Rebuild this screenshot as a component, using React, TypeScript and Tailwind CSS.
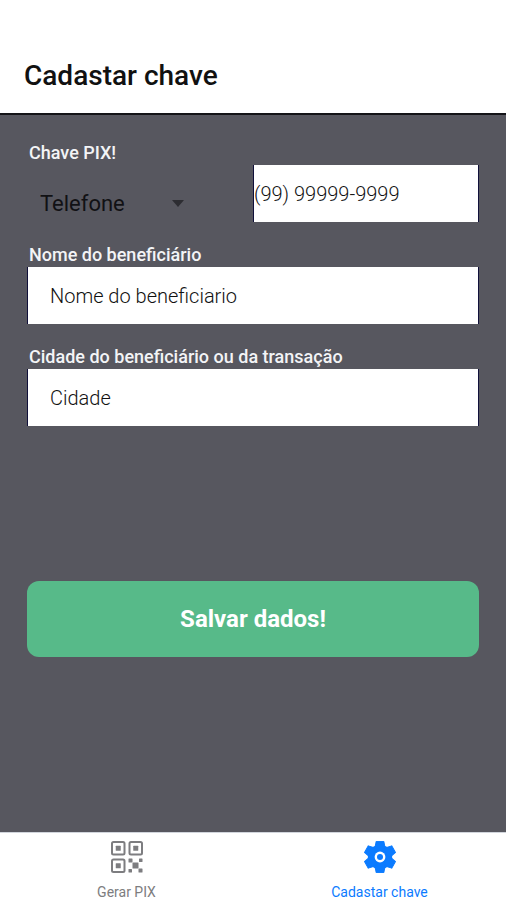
import { useState } from "react";

const labelClass =
  "block h-6 pl-0.5 text-lg leading-6 font-medium text-gray-100";
const inputClass =
  "h-[57px] w-full border-x border-[#10103a] bg-white text-xl font-light text-black placeholder:text-[#111111] outline-none";

function QrIcon() {
  return (
    <svg viewBox="0 0 32 32" className="size-8" aria-hidden="true">
      <g fill="none" stroke="currentColor" strokeWidth="2">
        <rect x="1" y="1" width="12.5" height="12.5" rx="1.5" />
        <rect x="18.5" y="1" width="12.5" height="12.5" rx="1.5" />
        <rect x="1" y="18.5" width="12.5" height="12.5" rx="1.5" />
      </g>
      <g fill="currentColor">
        <rect x="4.75" y="4.75" width="5" height="5" rx="0.5" />
        <rect x="22.25" y="4.75" width="5" height="5" rx="0.5" />
        <rect x="4.75" y="22.25" width="5" height="5" rx="0.5" />
        <rect x="21.5" y="21.5" width="6" height="6" rx="0.5" />
        <rect x="17.5" y="17.5" width="4" height="4" rx="0.5" />
        <rect x="28" y="17.5" width="3.5" height="3.5" rx="0.5" />
        <rect x="17.5" y="28" width="3.5" height="3.5" rx="0.5" />
        <rect x="27.5" y="27.5" width="4" height="4" rx="0.5" />
      </g>
    </svg>
  );
}

function GearIcon() {
  return (
    <svg viewBox="0 0 32 32" className="size-8" aria-hidden="true">
      <circle cx="16" cy="16" r="12.2" fill="currentColor" />
      <g
        fill="currentColor"
        stroke="currentColor"
        strokeWidth="1"
        strokeLinejoin="round"
      >
        {[0, 60, 120, 180, 240, 300].map((angle) => (
          <path
            key={angle}
            d="M12.2 0.3h7.6l1 5.2v4h-9.6v-4z"
            transform={`rotate(${angle} 16 16)`}
          />
        ))}
      </g>
      <circle cx="16" cy="16" r="5.4" fill="white" />
      <circle cx="16" cy="16" r="3" fill="currentColor" />
    </svg>
  );
}

export default function App() {
  const [keyType, setKeyType] = useState("Telefone");

  return (
    <div className="flex min-h-screen flex-col bg-[#57575f] font-['Roboto',sans-serif]">
      <header className="border-b-2 border-[#141418] bg-white px-6 pt-14 pb-[17px]">
        <h1 className="text-[28px] leading-10 font-medium text-[#111111]">
          Cadastar chave
        </h1>
      </header>

      <main className="flex-1 px-[27px] pt-[26px]">
        <form onSubmit={(e) => e.preventDefault()}>
          <div className="flex flex-col gap-[21px]">
            <div>
              <label htmlFor="key-type" className={labelClass}>
                Chave PIX!
              </label>
              <div className="grid grid-cols-2">
                <div className="relative">
                  <select
                    id="key-type"
                    value={keyType}
                    onChange={(e) => setKeyType(e.target.value)}
                    className="h-[57px] w-44 appearance-none bg-transparent pt-5 pl-[13px] text-[22px] text-[#111114] outline-none"
                  >
                    <option>Telefone</option>
                    <option>CPF</option>
                    <option>E-mail</option>
                  </select>
                  <svg
                    viewBox="0 0 12 7"
                    className="pointer-events-none absolute top-[35px] left-[145px] h-[7px] w-3 fill-[#2d2d32]"
                  >
                    <path d="M0 0h12L6 7z" />
                  </svg>
                </div>
                <input
                  type="tel"
                  aria-label="Telefone"
                  placeholder="(99) 99999-9999"
                  className={inputClass}
                />
              </div>
            </div>

            <div>
              <label htmlFor="name" className={labelClass}>
                Nome do beneficiário
              </label>
              <input
                id="name"
                type="text"
                placeholder="Nome do beneficiario"
                className={`${inputClass} px-[22px]`}
              />
            </div>

            <div>
              <label htmlFor="city" className={labelClass}>
                Cidade do beneficiário ou da transação
              </label>
              <input
                id="city"
                type="text"
                placeholder="Cidade"
                className={`${inputClass} px-[22px]`}
              />
            </div>
          </div>

          <button
            type="submit"
            className="mt-[155px] h-19 w-full rounded-xl bg-[#57ba89] text-2xl font-bold text-white"
          >
            Salvar dados!
          </button>
        </form>
      </main>

      <nav className="grid grid-cols-2 border-t border-gray-300 bg-white pt-2 text-sm">
        <a
          href="#gerar"
          className="flex flex-col items-center gap-[11px] text-[#7d7d80]"
        >
          <QrIcon />
          <span className="leading-4">Gerar PIX</span>
        </a>
        <a
          href="#cadastrar"
          className="flex flex-col items-center gap-[11px] text-[#0b7bff]"
        >
          <GearIcon />
          <span className="leading-4">Cadastar chave</span>
        </a>
      </nav>
    </div>
  );
}
